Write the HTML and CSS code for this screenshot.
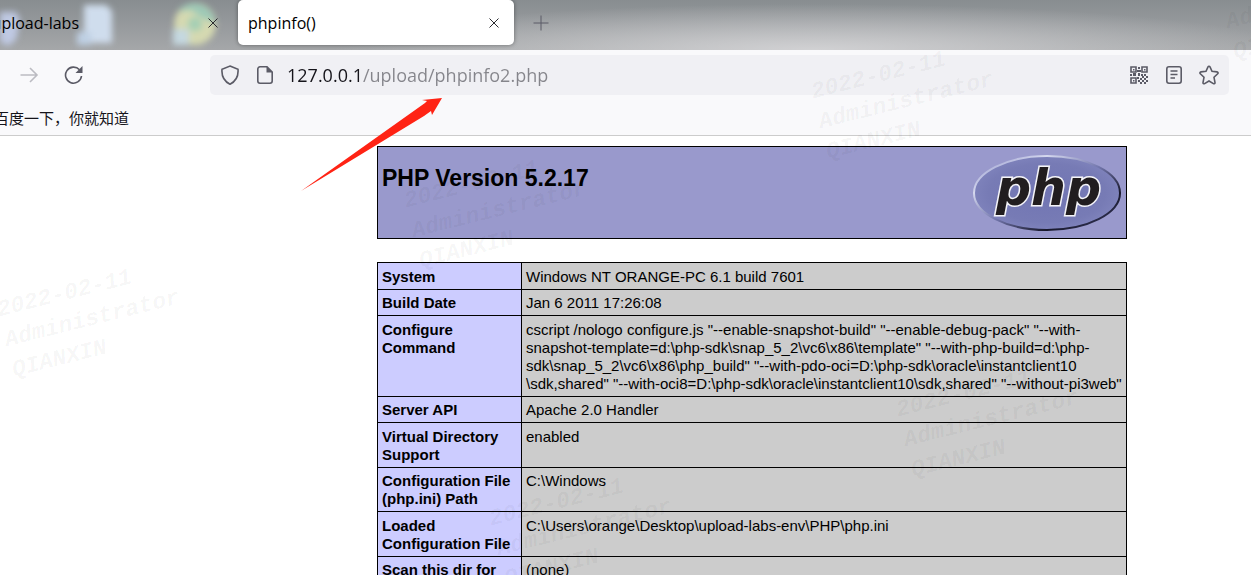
FILE: index.html
```
<!DOCTYPE html>
<html lang="zh-CN">
<head>
<meta charset="utf-8">
<title>phpinfo()</title>
<link rel="stylesheet" href="styles.css">
</head>
<body>
<header class="browser">
  <nav class="tabs" aria-label="Tabs">
    <svg class="glass" width="240" height="50" viewBox="0 0 240 50" aria-hidden="true">
      <g class="glass-shapes">
        <path d="M0 12h16l4 8-4 20-8 6-8-4z" fill="#bfc9e3"/>
        <path d="M84 5h22l6 6v32H84z" fill="#cfdded"/>
        <path d="M77 32h14v13H77z" fill="#bfd0e4"/>
        <circle cx="195" cy="24" r="21" fill="#d5d9b1"/>
        <path d="M178 11a21 21 0 0 1 37 12l-12-5-12-8z" fill="#9cc9b7"/>
        <circle cx="195" cy="24" r="7" fill="#a5cfb4"/>
        <path d="M173 29h16v16h-16z" fill="#c5d8e0"/>
      </g>
    </svg>
    <div class="tab tab-first">
      <span class="tab-title">upload-labs</span>
      <button class="tab-close" type="button" aria-label="Close upload-labs"><svg width="10" height="10" viewBox="0 0 10 10"><path d="M.5.5l9 9M9.500.5l-9 9"/></svg></button>
    </div>
    <div class="tab tab-active">
      <span class="tab-title">phpinfo()</span>
      <button class="tab-close" type="button" aria-label="Close phpinfo()"><svg width="10" height="10" viewBox="0 0 10 10"><path d="M.5.5l9 9M9.500.5l-9 9"/></svg></button>
    </div>
    <button class="tab-new" type="button" aria-label="New tab"><svg width="16" height="16" viewBox="0 0 16 16"><path d="M8 .5v15M.5 8h15"/></svg></button>
  </nav>
  <div class="toolbar">
    <button class="tool tool-off" type="button" aria-label="Forward"><svg width="20" height="20" viewBox="0 0 20 20"><path d="M1.500 10h16M11 3l7 7-7 7"/></svg></button>
    <button class="tool" type="button" aria-label="Reload"><svg width="20" height="20" viewBox="0 0 20 20"><path d="M17.500 11A8 8 0 1 1 15.500 4.800"/><path class="solid" d="M18.500 1v7h-7z"/></svg></button>
    <div class="address">
      <button class="tool" type="button" aria-label="Protection"><svg width="20" height="20" viewBox="0 0 20 20"><path d="M10 1l8 3.300c.5 6-1.500 11.700-8 14.900C3.500 16 1.500 10.300 2 4.300z"/></svg></button>
      <button class="tool" type="button" aria-label="Site information"><svg width="20" height="20" viewBox="0 0 20 20"><path d="M12 1.800H5A2.200 2.200 0 0 0 2.800 4v12A2.200 2.200 0 0 0 5 18.200h10a2.200 2.200 0 0 0 2.200-2.200V7z"/><path class="solid" d="M11.500 1.500v6h6z"/></svg></button>
      <input class="url" type="text" value="127.0.0.1/upload/phpinfo2.php" aria-label="Address" spellcheck="false">
      <div class="actions">
        <button class="tool" type="button" aria-label="QR code"><svg width="20" height="20" viewBox="0 0 20 20"><path d="M2 2h5v5H2zM13 2h5v5h-5zM2 13h5v5H2z"/><path class="solid" d="M4 4h1.500v1.500H4zM15 4h1.500v1.500H15zM4 15h1.500v1.500H4zM9 2h2v2H9zM8 5h4v2H8zM9 8h2v3H9zM1 9h2v2H1zM4 8h3v3H4zM12 9h2v2h-2zM15 9h2v2h-2zM17 11h2v2h-2zM13 11h2v2h-2zM8 12h2v2H8zM11 13h2v2h-2zM15 13h2v2h-2zM9 15h2v2H9zM13 15h2v2h-2zM17 15h2v2h-2zM11 17h2v2h-2zM15 17h2v2h-2z"/></svg></button>
        <button class="tool" type="button" aria-label="Reader view"><svg width="20" height="20" viewBox="0 0 20 20"><rect x="2.800" y="1.800" width="14.400" height="16.400" rx="2.200"/><path d="M6.500 6h7M6.500 9.500h7M6.500 13H11"/></svg></button>
        <button class="tool" type="button" aria-label="Bookmark"><svg width="20" height="20" viewBox="0 0 20 20"><path d="M10 1.200c.5 0 .8.300 1 .7l2 4.400 5 .6c1 .2 1.400 1.100.7 1.800L15 12.300l1 5.200c.1 1-.8 1.600-1.600 1.100L10 16l-4.400 2.600c-.8.500-1.700-.1-1.600-1.100l1-5.200-3.700-3.600C.6 8 1 7.100 2 6.900l5-.6 2-4.400c.2-.4.500-.7 1-.7z"/></svg></button>
      </div>
    </div>
  </div>
  <nav class="bookmarks" aria-label="Bookmarks"><a class="bookmark" href="#">百度一下，你就知道</a></nav>
</header>

<main class="page">
  <section class="version">
    <h1 class="version-title">PHP Version 5.2.17</h1>
    <svg class="logo" width="150" height="84" viewBox="0 0 150 84" role="img" aria-label="PHP logo">
      <defs>
        <linearGradient id="rim" x1="0" y1="0" x2="1" y2="1">
          <stop offset="0" stop-color="#8d91c8"/><stop offset=".25" stop-color="#d5d8ee"/><stop offset=".5" stop-color="#7377ad"/><stop offset=".75" stop-color="#17172a"/><stop offset="1" stop-color="#40436e"/>
        </linearGradient>
        <radialGradient id="face"><stop offset="0" stop-color="#7175b3"/><stop offset=".8" stop-color="#777bb5"/><stop offset="1" stop-color="#7e82bb"/></radialGradient>
      </defs>
      <ellipse cx="75" cy="43" rx="73" ry="37" fill="url(#face)" stroke="url(#rim)" stroke-width="2"/>
      <text class="logo-text" x="24" y="55">php</text>
    </svg>
  </section>

  <table class="info">
    <tbody>
      <tr><th scope="row">System</th><td>Windows NT ORANGE-PC 6.1 build 7601</td></tr>
      <tr><th scope="row">Build Date</th><td>Jan 6 2011 17:26:08</td></tr>
      <tr><th scope="row">Configure Command</th><td>cscript /nologo configure.js "--enable-snapshot-build" "--enable-debug-pack" "--with-<br>snapshot-template=d:\php-sdk\snap_5_2\vc6\x86\template" "--with-php-build=d:\php-<br>sdk\snap_5_2\vc6\x86\php_build" "--with-pdo-oci=D:\php-sdk\oracle\instantclient10<br>\sdk,shared" "--with-oci8=D:\php-sdk\oracle\instantclient10\sdk,shared" "--without-pi3web"</td></tr>
      <tr><th scope="row">Server API</th><td>Apache 2.0 Handler</td></tr>
      <tr><th scope="row">Virtual Directory Support</th><td>enabled</td></tr>
      <tr><th scope="row">Configuration File (php.ini) Path</th><td>C:\Windows</td></tr>
      <tr><th scope="row">Loaded Configuration File</th><td>C:\Users\orange\Desktop\upload-labs-env\PHP\php.ini</td></tr>
      <tr><th scope="row">Scan this dir for</th><td>(none)</td></tr>
    </tbody>
  </table>
</main>

<div class="marks" aria-hidden="true">
  <p class="mark mark-a">2022-02-11<br>Administrator<br>QIANXIN</p>
  <p class="mark mark-b">2022-02-11<br>Administrator<br>QIANXIN</p>
  <p class="mark mark-c">2022-02-11<br>Administrator<br>QIANXIN</p>
  <p class="mark mark-d">2022-02-11<br>Administrator<br>QIANXIN</p>
  <p class="mark mark-e">2022-02-11<br>Administrator<br>QIANXIN</p>
  <p class="mark mark-f">2022-02-11<br>Administrator<br>QIANXIN</p>
</div>
<svg class="arrow" width="144" height="96" viewBox="0 0 144 96" aria-hidden="true"><path d="M1 95L125 7l2-2-5-1 20-2-10 17-1-4-7 5L1 95z" fill="#ff2314"/></svg>
</body>
</html>
```
FILE: styles.css
```
* { box-sizing: border-box; }

body {
  margin: 0;
  height: 100vh;
  overflow: hidden;
  position: relative;
  background: #fff;
  color: #000;
  font-family: "Liberation Sans", Arial, sans-serif;
}

button {
  display: flex;
  align-items: center;
  justify-content: center;
  padding: 0;
  border: 0;
  background: none;
  color: #5b5b66;
}

button svg {
  fill: none;
  stroke: currentColor;
}

.browser {
  background: #f9f9fb;
  border-bottom: 1px solid #ccc;
  font-family: "Open Sans", "Noto Sans CJK SC", sans-serif;
}

.tabs {
  position: relative;
  display: flex;
  align-items: flex-start;
  height: 50px;
  overflow: hidden;
  background:
    radial-gradient(ellipse 480px 46px at 65% 100%, rgba(214, 214, 216, 0.9), rgba(208, 208, 210, 0)),
    linear-gradient(#888d90, #a5a7a9);
}

.glass {
  position: absolute;
  left: 0;
  top: 0;
}

.glass-shapes { filter: blur(3px); }

.tab {
  position: relative;
  display: flex;
  align-items: center;
  height: 45px;
  font-size: 16px;
}

.tab-first {
  width: 238px;
  padding-right: 15px;
  justify-content: space-between;
}

.tab-first .tab-title {
  display: flex;
  justify-content: flex-end;
  width: 79px;
  overflow: hidden;
  white-space: nowrap;
}

.tab-active {
  width: 276px;
  padding: 0 10px;
  justify-content: space-between;
  border-radius: 5px;
  background: #fff;
  box-shadow: 0 0 4px rgba(0, 0, 0, 0.4);
}

.tab-close {
  width: 20px;
  height: 20px;
  color: #2b2b30;
}

.tab-new {
  width: 54px;
  height: 45px;
}

.toolbar {
  display: flex;
  align-items: center;
  gap: 25px;
  padding: 5px 22px 5px 19px;
}

.tool {
  flex: none;
  width: 20px;
  height: 20px;
}

.tool svg { stroke-width: 1.6; }

.tool-off { color: #bcbcc2; }

.solid { fill: currentColor; stroke: none; }

.address {
  flex: 1;
  display: flex;
  align-items: center;
  gap: 15px;
  height: 40px;
  margin-left: 101px;
  padding: 0 10px;
  border-radius: 5px;
  background: #f0f0f4;
}

.url {
  flex: 1;
  min-width: 0;
  height: 32px;
  margin-left: -3px;
  padding: 0;
  border: 0;
  outline: 0;
  background: linear-gradient(90deg, #15141a 76px, #85858b 76px);
  background-clip: text;
  color: transparent;
  caret-color: #15141a;
  font: 18px "Open Sans", sans-serif;
}

.actions {
  display: flex;
  gap: 15px;
}

.bookmarks {
  height: 35px;
  display: flex;
  align-items: center;
}

.bookmark {
  display: flex;
  justify-content: flex-end;
  width: 129px;
  overflow: hidden;
  white-space: nowrap;
  color: #15141a;
  font-family: "Noto Sans CJK SC", sans-serif;
  font-size: 15px;
  text-decoration: none;
}

.page {
  max-width: 1003px;
  margin-left: auto;
  margin-right: 124px;
  padding: 10px 0 0 253px;
}

.version {
  display: flex;
  align-items: flex-start;
  justify-content: space-between;
  height: 93px;
  padding: 3px 4px;
  border: 1px solid #000;
  background: #9999cc;
}

.version-title {
  margin: 14px 0 0;
  font-size: 23px;
  line-height: 28px;
}

.logo-text {
  font: italic bold 49px "DejaVu Sans", sans-serif;
  fill: #211d1f;
  stroke: #f4f4f8;
  stroke-width: 3px;
  paint-order: stroke;
}

.info {
  width: 100%;
  margin-top: 23px;
  border-collapse: collapse;
  font-size: 15px;
  line-height: 18px;
}

.info th,
.info td {
  padding: 5px 4px 3px;
  border: 1px solid #000;
  text-align: left;
  vertical-align: top;
}

.info tr:nth-child(even) > * { padding-top: 4px; }

.info th {
  width: 144px;
  background: #ccccff;
}

.info td { background: #cccccc; }

.marks {
  position: absolute;
  inset: 0;
  overflow: hidden;
  pointer-events: none;
}

.mark {
  position: absolute;
  margin: 0;
  color: rgba(0, 0, 0, 0.045);
  font: italic bold 23px/31px "Liberation Mono", monospace;
  transform: rotate(-14deg);
  transform-origin: 0 0;
}

.mark-a { left: -6px; top: 296px; }
.mark-b { left: 401px; top: 187px; }
.mark-c { left: 808px; top: 78px; }
.mark-d { left: 486px; top: 505px; }
.mark-e { left: 893px; top: 396px; }
.mark-f { left: 1215px; top: -22px; }

.arrow {
  position: absolute;
  left: 300px;
  top: 96px;
  pointer-events: none;
}
```
